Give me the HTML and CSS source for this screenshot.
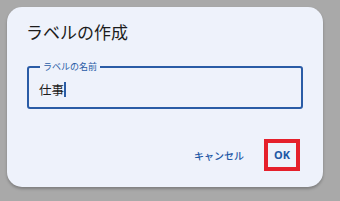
FILE: index.html
```html
<!DOCTYPE html>
<html lang="ja">

<head>
    <meta charset="UTF-8">
    <meta name="viewport" content="width=device-width, initial-scale=1.0">
    <title>ラベルの作成</title>
    <link rel="stylesheet" href="styles.css">
</head>

<body>
    <div class="dialog">
        <div class="title">ラベルの作成</div>
        <fieldset class="field">
            <legend>ラベルの名前</legend>
            <div class="value">仕事<span class="caret"></span></div>
        </fieldset>
        <div class="actions">
            <a href="javascript:;" class="btn">キャンセル</a>
            <a href="javascript:;" class="btn ok">OK</a>
        </div>
    </div>
</body>

</html>
```

FILE: styles.css
```css
* {
    padding: 0;
    margin: 0;
    box-sizing: border-box;
}

body {
    background-color: #a9a9a9;
    font-family: "Noto Sans CJK JP", "Noto Sans", sans-serif;
    color: #1c1c1c;
}

.dialog {
    width: 316px;
    height: 180px;
    margin: 7px;
    padding: 12px 20px 0 19px;
    background-color: #eef2fb;
    border-radius: 15px;
    box-shadow: 0 2px 3px rgba(0, 0, 0, .25);
}

.title {
    height: 26px;
    line-height: 26px;
    font-size: 17px;
}

.field {
    margin: 17px 0 0 1px;
    height: 47px;
    padding: 0 10px;
    border: 2px solid #2a5ca6;
    border-radius: 3px;
}

.field legend {
    padding: 0 3px;
    margin-left: 1px;
    font-size: 9px;
    line-height: 10px;
    color: #2a5ca6;
}

.value {
    display: flex;
    align-items: center;
    height: 34px;
    font-size: 12.5px;
}

.caret {
    display: inline-block;
    width: 2px;
    height: 15px;
    background-color: #2a5ca6;
}

.actions {
    display: flex;
    justify-content: flex-end;
    align-items: center;
    gap: 20px;
    margin-top: 30px;
    padding-right: 3px;
}

a {
    text-decoration: none;
    color: #1e58a6;
}

.btn {
    font-size: 10px;
    font-weight: 500;
}

.ok {
    width: 36px;
    height: 32px;
    line-height: 24px;
    border: 4px solid #e5202b;
    text-align: center;
    font-size: 11px;
    font-weight: 700;
    font-family: "Noto Sans", sans-serif;
}
```
